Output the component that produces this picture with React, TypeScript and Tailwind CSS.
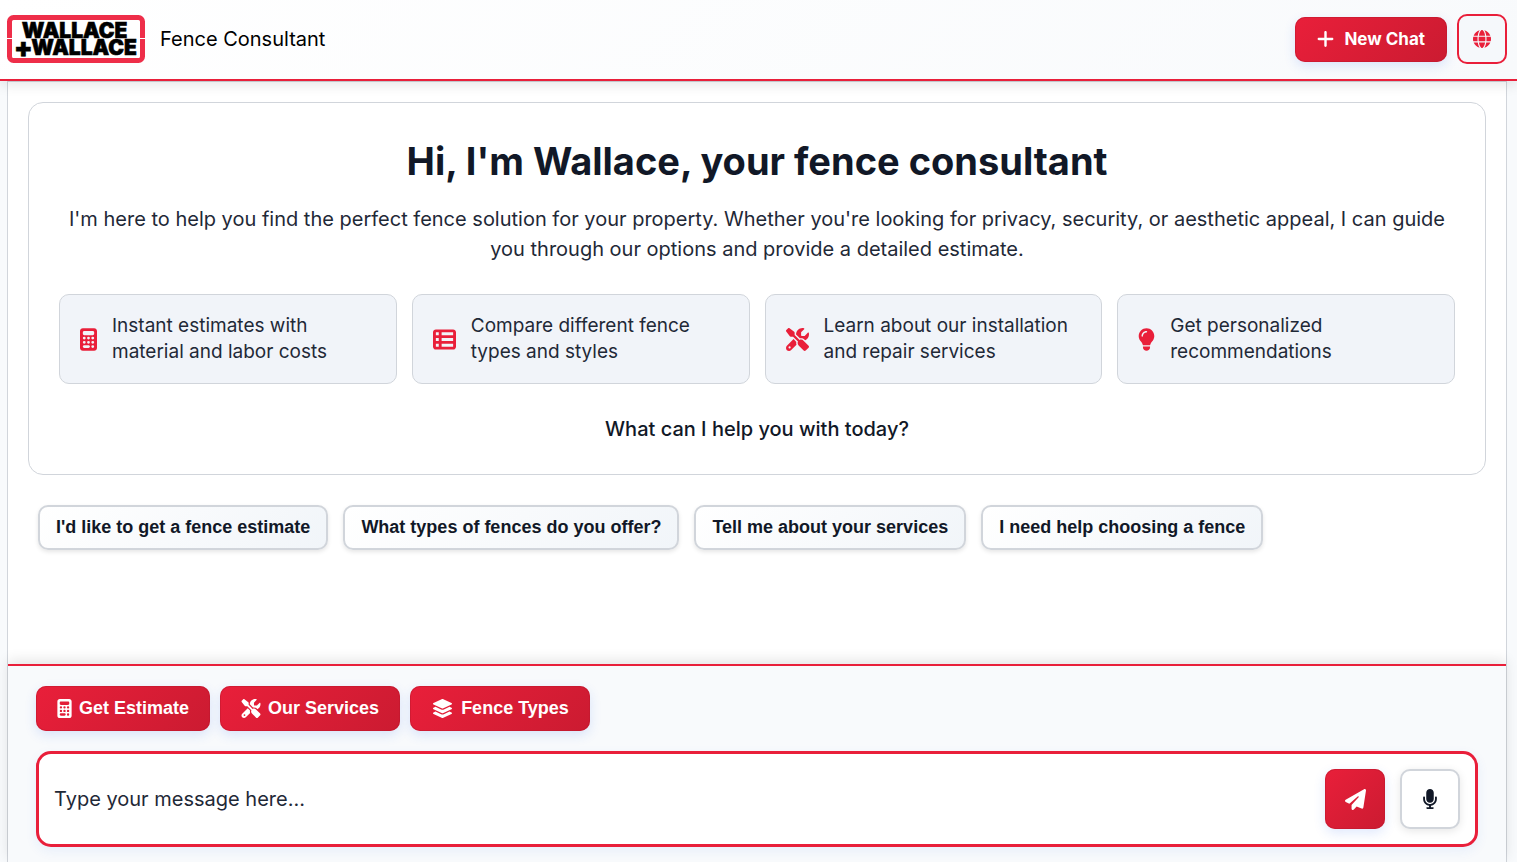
import { useState } from "react";
import type { IconType } from "react-icons";
import {
  FaCalculator,
  FaGlobe,
  FaLayerGroup,
  FaLightbulb,
  FaMicrophone,
  FaPaperPlane,
  FaPlus,
  FaScrewdriverWrench,
  FaTableList,
} from "react-icons/fa6";

const features: { icon: IconType; width: string; text: string }[] = [
  { icon: FaCalculator, width: "w-[17px]", text: "Instant estimates with material and labor costs" },
  { icon: FaTableList, width: "w-[23px]", text: "Compare different fence types and styles" },
  { icon: FaScrewdriverWrench, width: "w-[23px]", text: "Learn about our installation and repair services" },
  { icon: FaLightbulb, width: "w-[17px]", text: "Get personalized recommendations" },
];

const suggestions = [
  "I'd like to get a fence estimate",
  "What types of fences do you offer?",
  "Tell me about your services",
  "I need help choosing a fence",
];

const quickActions: { icon: IconType; width: string; label: string; message: string }[] = [
  { icon: FaCalculator, width: "w-[15px]", label: "Get Estimate", message: "I'd like to get a fence estimate" },
  { icon: FaScrewdriverWrench, width: "w-5", label: "Our Services", message: "Tell me about your services" },
  { icon: FaLayerGroup, width: "w-[23px]", label: "Fence Types", message: "What types of fences do you offer?" },
];

const redButton =
  "bg-linear-135 from-[#e91f3a] to-[#cb1b31] text-white shadow-[0_4px_12px_rgba(37,99,235,0.15),inset_0_0_0_1px_rgba(190,24,46,0.5)] hover:to-[#b01528]";

function Logo() {
  return (
    <svg viewBox="0 0 138 48" className="h-12 w-[138px] shrink-0" role="img" aria-label="Wallace + Wallace">
      <rect x="2.5" y="2.5" width="133" height="43" rx="4" fill="#fff" stroke="#ee2e49" strokeWidth="5" />
      <path d="M0 23.5h6M132 23.5h6" stroke="#fff" strokeWidth="1" />
      <text fill="#000" stroke="#000" strokeWidth="0.6" fontFamily="Inter, sans-serif" fontWeight="900" fontSize="21">
        <tspan x="67.5" y="23" textAnchor="middle">
          WALLACE
        </tspan>
        <tspan x="7" y="42" fontSize="27">
          +
        </tspan>
        <tspan x="77" y="40" textAnchor="middle">
          WALLACE
        </tspan>
      </text>
    </svg>
  );
}

export default function App() {
  const [message, setMessage] = useState("");

  return (
    <div className="flex h-screen flex-col bg-[#f8fafc] font-['Inter',sans-serif] text-[#111827]">
      <header className="relative z-10 flex items-center justify-between border-b-2 border-[#e91f3a] bg-linear-135 from-white to-[#f8fafc] pt-[14px] pr-[10px] pb-[15px] pl-[7px] shadow-[0_4px_12px_rgba(0,0,0,0.1)]">
        <div className="flex items-center gap-[15px]">
          <Logo />
          <span className="text-xl text-black">Fence Consultant</span>
        </div>
        <div className="flex items-center gap-[10px]">
          <button
            type="button"
            onClick={() => setMessage("")}
            className={`flex h-[45px] items-center gap-[10px] rounded-[10px] px-[22px] text-[17px] leading-[27px] font-bold ${redButton}`}
          >
            <FaPlus className="h-5 w-[17px]" />
            New Chat
          </button>
          <button
            type="button"
            aria-label="Change language"
            className="flex size-[50px] items-center justify-center rounded-[10px] border-2 border-[#e91f3a] bg-[#f1f5f9]/40 text-[#e91f3a]"
          >
            <FaGlobe className="size-[18px]" />
          </button>
        </div>
      </header>

      <div className="flex min-h-0 flex-1 flex-col pr-[10px] pl-[7px]">
        <div className="flex min-h-0 flex-1 flex-col border-x border-t border-[#d1d5db] bg-white">
          <main className="flex-1 overflow-hidden p-5">
            <section className="rounded-[15px] border border-[#d1d5db] bg-white p-[30px] text-center">
              <h1 className="mb-[15px] text-[38px] leading-[56px] font-bold">
                Hi, I'm Wallace, your fence consultant
              </h1>
              <p className="mb-[30px] text-xl leading-[30px] text-[#1f2937]">
                I'm here to help you find the perfect fence solution for your property. Whether you're looking for
                privacy, security, or aesthetic appeal, I can guide you through our options and provide a detailed
                estimate.
              </p>
              <div className="mb-[30px] grid grid-cols-4 gap-[15px]">
                {features.map(({ icon: Icon, width, text }) => (
                  <div
                    key={text}
                    className="flex items-center gap-[15px] rounded-[10px] border border-[#d1d5db] bg-[#f1f4f9] px-5 py-[18px] text-left"
                  >
                    <Icon className={`h-[23px] shrink-0 text-[#e91f3a] ${width}`} />
                    <span className="text-[19px] leading-[26px] text-[#1f2937]">{text}</span>
                  </div>
                ))}
              </div>
              <p className="text-xl leading-[30px] font-medium">What can I help you with today?</p>
            </section>

            <div className="mt-[30px] flex flex-wrap gap-[15px] px-[10px]">
              {suggestions.map((text) => (
                <button
                  key={text}
                  type="button"
                  onClick={() => setMessage(text)}
                  className="h-[45px] rounded-[10px] border-2 border-[#d1d5db] bg-linear-135 from-white to-[#f1f5f9] px-4 font-['Liberation_Sans',Arial,sans-serif] text-[18px] font-bold shadow-[0_2px_4px_rgba(0,0,0,0.1)]"
                >
                  {text}
                </button>
              ))}
            </div>
          </main>

          <footer className="relative border-t-2 border-[#e91f3a] bg-[#f8fafc] px-7 pt-5 pb-[15px] shadow-[0_-4px_12px_rgba(0,0,0,0.1)]">
            <div className="mb-5 flex flex-wrap gap-[10px]">
              {quickActions.map(({ icon: Icon, width, label, message: preset }) => (
                <button
                  key={label}
                  type="button"
                  onClick={() => setMessage(preset)}
                  className={`flex h-[45px] items-center gap-[7px] rounded-[10px] px-[21px] font-['Liberation_Sans',Arial,sans-serif] text-[18px] font-bold ${redButton}`}
                >
                  <Icon className={`h-[19px] ${width}`} />
                  {label}
                </button>
              ))}
            </div>

            <form
              onSubmit={(e) => e.preventDefault()}
              className="flex items-center gap-[15px] rounded-[15px] border-[3px] border-[#e91f3a] bg-white p-[15px] shadow-[0_4px_12px_rgba(37,99,235,0.08)]"
            >
              <input
                type="text"
                aria-label="Message"
                value={message}
                onChange={(e) => setMessage(e.target.value)}
                placeholder="Type your message here..."
                className="min-w-0 flex-1 text-xl text-[#1f2937] outline-none placeholder:text-[#1f2937]"
              />
              <button
                type="submit"
                aria-label="Send message"
                className={`flex size-[60px] items-center justify-center rounded-[10px] ${redButton}`}
              >
                <FaPaperPlane className="size-[21px]" />
              </button>
              <button
                type="button"
                aria-label="Voice input"
                className="flex size-[60px] items-center justify-center rounded-[10px] border-2 border-[#d1d5db] bg-white shadow-[0_2px_8px_rgba(0,0,0,0.1)]"
              >
                <FaMicrophone className="h-5 w-auto" />
              </button>
            </form>
          </footer>
        </div>
      </div>
    </div>
  );
}
